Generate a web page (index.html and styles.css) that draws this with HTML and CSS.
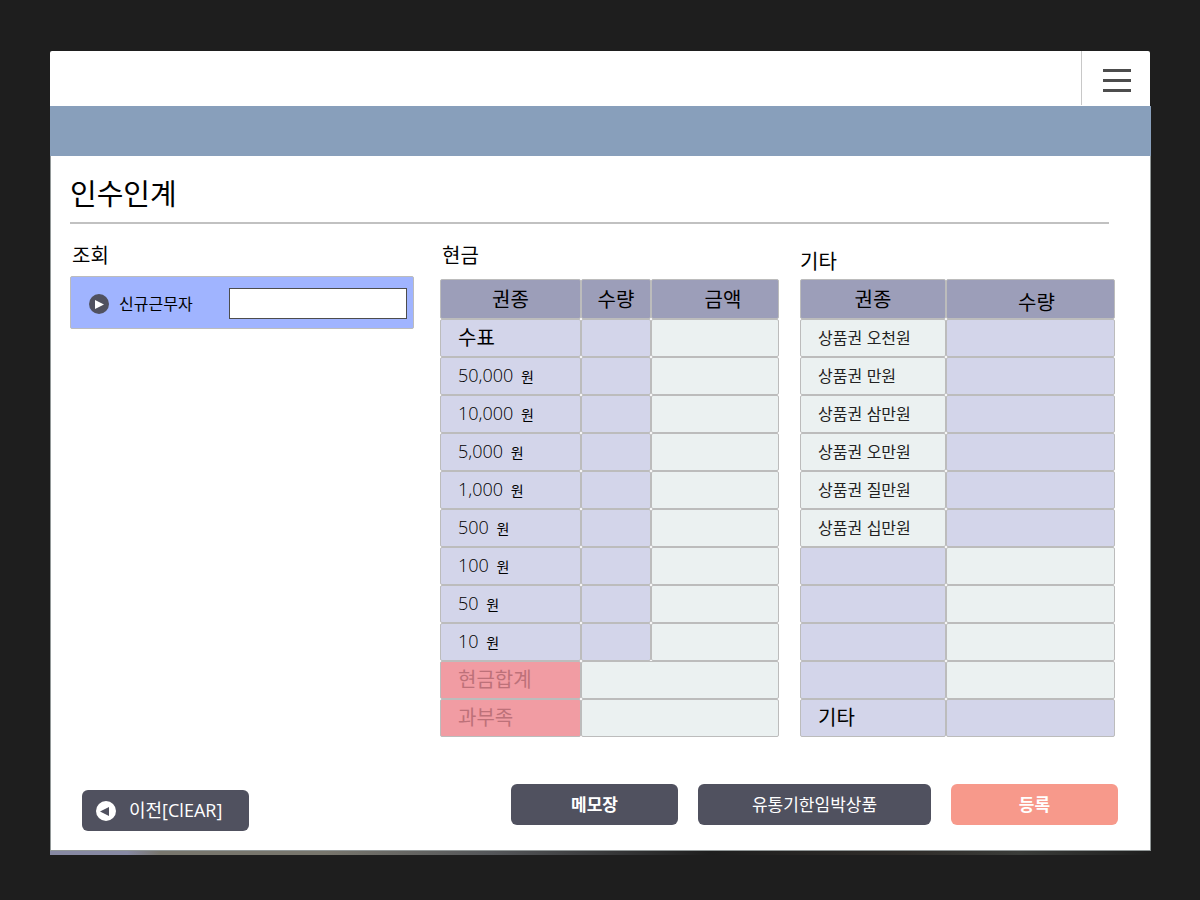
FILE: index.html
```html
<!DOCTYPE html>
<html lang="ko">
<head>
<meta charset="utf-8">
<title>인수인계</title>
<link rel="stylesheet" href="styles.css">
</head>
<body>
<div class="screen">
  <header class="topbar">
    <button class="menu" type="button" aria-label="메뉴">
      <svg width="28" height="23" viewBox="0 0 28 23" aria-hidden="true"><path d="M0 1.500h28M0 11.500h28M0 21.500h28" stroke="#4d4d4d" stroke-width="3"/></svg>
    </button>
  </header>
  <div class="band"></div>
  <main class="content">
    <h1 class="title">인수인계</h1>
    <div class="columns">
      <section class="inquiry">
        <h2 class="heading">조회</h2>
        <div class="search">
          <svg width="20" height="20" viewBox="0 0 20 20" aria-hidden="true"><circle cx="10" cy="10" r="10" fill="#50515f"/><path d="M6 6v9l9-4.500z" fill="#fff"/></svg>
          <label for="worker">신규근무자</label>
          <input id="worker" type="text">
        </div>
      </section>
      <section class="cash">
        <h2 class="heading">현금</h2>
        <table class="grid">
          <colgroup><col class="cash-kind"><col class="cash-count"><col></colgroup>
          <thead><tr><th>권종</th><th>수량</th><th class="amount">금액</th></tr></thead>
          <tbody>
            <tr><td class="edit large">수표</td><td class="edit"></td><td></td></tr>
            <tr><td class="edit">50,000 <span class="won">원</span></td><td class="edit"></td><td></td></tr>
            <tr><td class="edit">10,000 <span class="won">원</span></td><td class="edit"></td><td></td></tr>
            <tr><td class="edit">5,000 <span class="won">원</span></td><td class="edit"></td><td></td></tr>
            <tr><td class="edit">1,000 <span class="won">원</span></td><td class="edit"></td><td></td></tr>
            <tr><td class="edit">500 <span class="won">원</span></td><td class="edit"></td><td></td></tr>
            <tr><td class="edit">100 <span class="won">원</span></td><td class="edit"></td><td></td></tr>
            <tr><td class="edit">50 <span class="won">원</span></td><td class="edit"></td><td></td></tr>
            <tr><td class="edit">10 <span class="won">원</span></td><td class="edit"></td><td></td></tr>
            <tr><td class="total large">현금합계</td><td colspan="2"></td></tr>
            <tr><td class="total large">과부족</td><td colspan="2"></td></tr>
          </tbody>
        </table>
      </section>
      <section class="other">
        <h2 class="heading">기타</h2>
        <table class="grid">
          <colgroup><col class="other-kind"><col></colgroup>
          <thead><tr><th>권종</th><th class="count">수량</th></tr></thead>
          <tbody>
            <tr><td class="voucher">상품권 오천원</td><td class="edit"></td></tr>
            <tr><td class="voucher">상품권 만원</td><td class="edit"></td></tr>
            <tr><td class="voucher">상품권 삼만원</td><td class="edit"></td></tr>
            <tr><td class="voucher">상품권 오만원</td><td class="edit"></td></tr>
            <tr><td class="voucher">상품권 질만원</td><td class="edit"></td></tr>
            <tr><td class="voucher">상품권 십만원</td><td class="edit"></td></tr>
            <tr><td class="edit"></td><td></td></tr>
            <tr><td class="edit"></td><td></td></tr>
            <tr><td class="edit"></td><td></td></tr>
            <tr><td class="edit"></td><td></td></tr>
            <tr><td class="edit large">기타</td><td class="edit"></td></tr>
          </tbody>
        </table>
      </section>
    </div>
    <footer class="actions">
      <button class="btn back" type="button">
        <svg width="20" height="20" viewBox="0 0 20 20" aria-hidden="true"><circle cx="10" cy="10" r="10" fill="#fff"/><path d="M13 6v9l-9-4.500z" fill="#50515f"/></svg>
        <span>이전[ClEAR]</span>
      </button>
      <div class="group">
        <button class="btn strong" type="button">메모장</button>
        <button class="btn wide" type="button">유통기한임박상품</button>
        <button class="btn strong submit" type="button">등록</button>
      </div>
    </footer>
  </main>
  <div class="edge"></div>
</div>
</body>
</html>
```

FILE: styles.css
```css
* {
  box-sizing: border-box;
}

body {
  margin: 0;
  padding: 51px 49px 45px 50px;
  background: #1e1e1e;
  color: #000;
  font-family: "Open Sans", "Noto Sans CJK KR", sans-serif;
}

.topbar {
  display: flex;
  justify-content: flex-end;
  height: 55px;
  margin-right: 1px;
  background: #fff;
  border-radius: 2px 2px 0 0;
}

.menu {
  display: flex;
  align-items: center;
  width: 69px;
  height: 54px;
  padding: 5px 0 0 21px;
  border: 0;
  border-left: 1px solid #c8c8c8;
  background: none;
}

.band {
  height: 50px;
  background: #889fbb;
}

.content {
  padding: 16px 35px 19px 19px;
  background: #fff;
  border: 1px solid #929898;
  border-top: 0;
}

.title {
  margin: 0 6px 0 0;
  padding-bottom: 6px;
  border-bottom: 2px solid #c1c1c1;
  font-size: 29px;
  font-weight: 400;
  line-height: 44px;
}

.columns {
  display: grid;
  grid-template-columns: 349fr 339fr 315fr;
  column-gap: 21px;
  padding-top: 16px;
}

.inquiry {
  padding-right: 5px;
}

.heading {
  margin: 0;
  padding: 0 2px 4px;
  font-size: 20px;
  font-weight: 400;
  line-height: 32px;
}

.cash .heading {
  padding-bottom: 7px;
}

.other .heading {
  padding: 6px 0 1px;
}

.search {
  display: flex;
  align-items: center;
  height: 53px;
  padding: 2px 6px 0 18px;
  background: #a0b4ff;
  border: 1px solid #bcbcbc;
  border-radius: 2px;
}

.search label {
  margin-left: 10px;
  padding-bottom: 2px;
  font-size: 16px;
}

.search input {
  width: 178px;
  height: 31px;
  margin-left: auto;
  padding: 0 8px;
  border: 1px solid #4d4d4d;
  background: #fff;
  font: inherit;
}

.grid {
  width: 100%;
  table-layout: fixed;
  border-collapse: separate;
  border-spacing: 0;
}

.cash-kind {
  width: 141px;
}

.cash-count {
  width: 70px;
}

.other-kind {
  width: 146px;
}

.grid th {
  height: 40px;
  padding: 2px 0 0;
  background: #9c9eb9;
  border: 1px solid #bcbcbc;
  border-radius: 2px;
  font-size: 20px;
  font-weight: 400;
  line-height: 30px;
}

.grid .amount {
  padding-left: 16px;
}

.grid .count {
  padding: 8px 0 0 12px;
}

.grid td {
  height: 38px;
  padding: 0 17px;
  background: #ebf1f1;
  border: 1px solid #bcbcbc;
  border-radius: 2px;
  font-size: 18px;
  font-weight: 300;
  line-height: 28px;
  white-space: nowrap;
}

.grid .edit {
  background: #d3d5ea;
}

.grid .large {
  font-size: 20px;
  font-weight: 400;
}

.grid .voucher {
  color: #222;
  font-family: "Noto Sans CJK KR", sans-serif;
  font-size: 16px;
  font-weight: 400;
  padding: 0 17px 2px;
}

.grid .total {
  background: #f19ca3;
  color: #bd7179;
}

.won {
  margin-left: 3px;
  font-size: 14px;
  font-weight: 400;
}

.actions {
  display: flex;
  justify-content: space-between;
  align-items: flex-start;
  margin: 47px -3px 0 12px;
}

.group {
  display: flex;
  gap: 20px;
}

.btn {
  width: 167px;
  height: 41px;
  padding: 0 0 3px;
  border: 0;
  border-radius: 6px;
  background: #50515f;
  color: #fff;
  font-family: inherit;
  font-size: 17px;
  font-weight: 400;
}

.back {
  display: flex;
  align-items: center;
  gap: 13px;
  margin-top: 6px;
  padding: 0 0 0 14px;
  font-size: 18px;
}

.back span {
  padding-bottom: 4px;
}

.wide {
  width: 233px;
}

.strong {
  font-weight: 700;
}

.submit {
  background: #f7998b;
}

.edge {
  height: 4px;
  background: linear-gradient(90deg, #8789a3 0, #8789a3 7%, #78766d 10%, #78766d 25%, #55575a 40%, #1e1e1e 60%, #302d2a 78%, #3a3c39 88%, #1e1e1e 100%);
}
```
